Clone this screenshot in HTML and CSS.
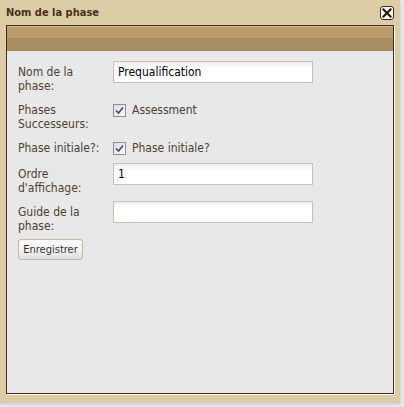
FILE: index.html
```html
<!DOCTYPE html>
<html>
<head>
<meta charset="utf-8">
<link rel="stylesheet" href="styles.css">
</head>
<body>
<div class="dialog">
  <div class="titlebar">
    <span class="title">Nom de la phase</span>
    <span class="close"><svg width="10" height="10" viewBox="0 0 10 10"><path d="M1.5 1.5 L8.5 8.5 M8.5 1.5 L1.5 8.5" stroke="#2a1a10" stroke-width="2.2" stroke-linecap="square"/></svg></span>
  </div>
  <div class="panel">
    <div class="band"></div>
    <form class="form">
      <div class="row">
        <div class="label">Nom de la<br>phase:</div>
        <div class="control"><span class="input">Prequalification</span></div>
      </div>
      <div class="row">
        <div class="label">Phases<br>Successeurs:</div>
        <div class="control"><span class="check"><svg width="9" height="9" viewBox="0 0 9 9"><path d="M1 4.5 L3.5 7 L8 1.5" fill="none" stroke="#3a4a8a" stroke-width="1.6"/></svg></span><span class="ctext">Assessment</span></div>
      </div>
      <div class="row">
        <div class="label">Phase initiale?:</div>
        <div class="control"><span class="check"><svg width="9" height="9" viewBox="0 0 9 9"><path d="M1 4.5 L3.5 7 L8 1.5" fill="none" stroke="#3a4a8a" stroke-width="1.6"/></svg></span><span class="ctext">Phase initiale?</span></div>
      </div>
      <div class="row">
        <div class="label">Ordre<br>d'affichage:</div>
        <div class="control"><span class="input">1</span></div>
      </div>
      <div class="row">
        <div class="label">Guide de la<br>phase:</div>
        <div class="control"><span class="input"></span></div>
      </div>
      <div class="actions"><span class="button">Enregistrer</span></div>
    </form>
  </div>
</div>
</body>
</html>
```
FILE: styles.css
```css
html, body {
  margin: 0;
  padding: 0;
}
body {
  width: 404px;
  height: 407px;
  background: #e6e6e6;
  font-family: "DejaVu Sans Condensed", "DejaVu Sans", sans-serif;
  overflow: hidden;
}
.dialog {
  width: 400px;
  height: 402px;
  background: #ddcda6;
  box-sizing: border-box;
  padding: 0 6px 0 6px;
  display: flex;
  flex-direction: column;
  box-shadow: 0 2px 2px rgba(0,0,0,0.12);
}
.titlebar {
  height: 25px;
  display: flex;
  align-items: center;
  justify-content: space-between;
}
.title {
  font-weight: bold;
  font-size: 11px;
  color: #4a2e1a;
  margin-top: -1px;
}
.close {
  width: 12px;
  height: 12px;
  border: 1px solid #3a2a1c;
  border-radius: 3px;
  background: #fbfaf6;
  display: flex;
  align-items: center;
  justify-content: center;
  margin-top: 1px;
}
.panel {
  width: 388px;
  height: 369px;
  box-sizing: border-box;
  border: 1px solid #4a2818;
  background: #e8e8e8;
  box-shadow: 1px 1px 0 #ffffff;
}
.band {
  height: 25px;
  border-top: 1px solid #d2bd90;
  background: linear-gradient(#b99c6a 0, #b99c6a 11px, #a78e62 11px);
  box-sizing: border-box;
}
.form {
  padding: 10px 0 0 11px;
  display: grid;
  grid-template-rows: 38px 38px 26px 38px 38px auto;
}
.row {
  display: flex;
  align-items: flex-start;
}
.label {
  width: 95px;
  padding-top: 4px;
  font-size: 12px;
  line-height: 14px;
  color: #4d3f31;
}
.control {
  display: flex;
  align-items: center;
  height: 22px;
}
.input {
  width: 200px;
  height: 22px;
  box-sizing: border-box;
  border: 1px solid #c9bfb5;
  background: linear-gradient(#eceeef 0, #ffffff 6px, #ffffff 100%);
  font-size: 12px;
  color: #000;
  padding: 0 4px;
  line-height: 20px;
}
.check {
  width: 11px;
  height: 11px;
  border: 1px solid #8e8f8f;
  background: linear-gradient(135deg, #dcdcd7, #fbfbf8);
  display: flex;
  align-items: center;
  justify-content: center;
}
.ctext {
  margin-left: 6px;
  font-size: 12px;
  color: #4d3f31;
}
.actions {
  display: flex;
}
.button {
  width: 65px;
  height: 21px;
  box-sizing: border-box;
  border: 1px solid #c2b6a9;
  border-radius: 3px;
  background: linear-gradient(#fafafa 0, #f0f0f0 60%, #dedede 100%);
  font-size: 11px;
  color: #333;
  display: flex;
  align-items: center;
  justify-content: center;
}
```
